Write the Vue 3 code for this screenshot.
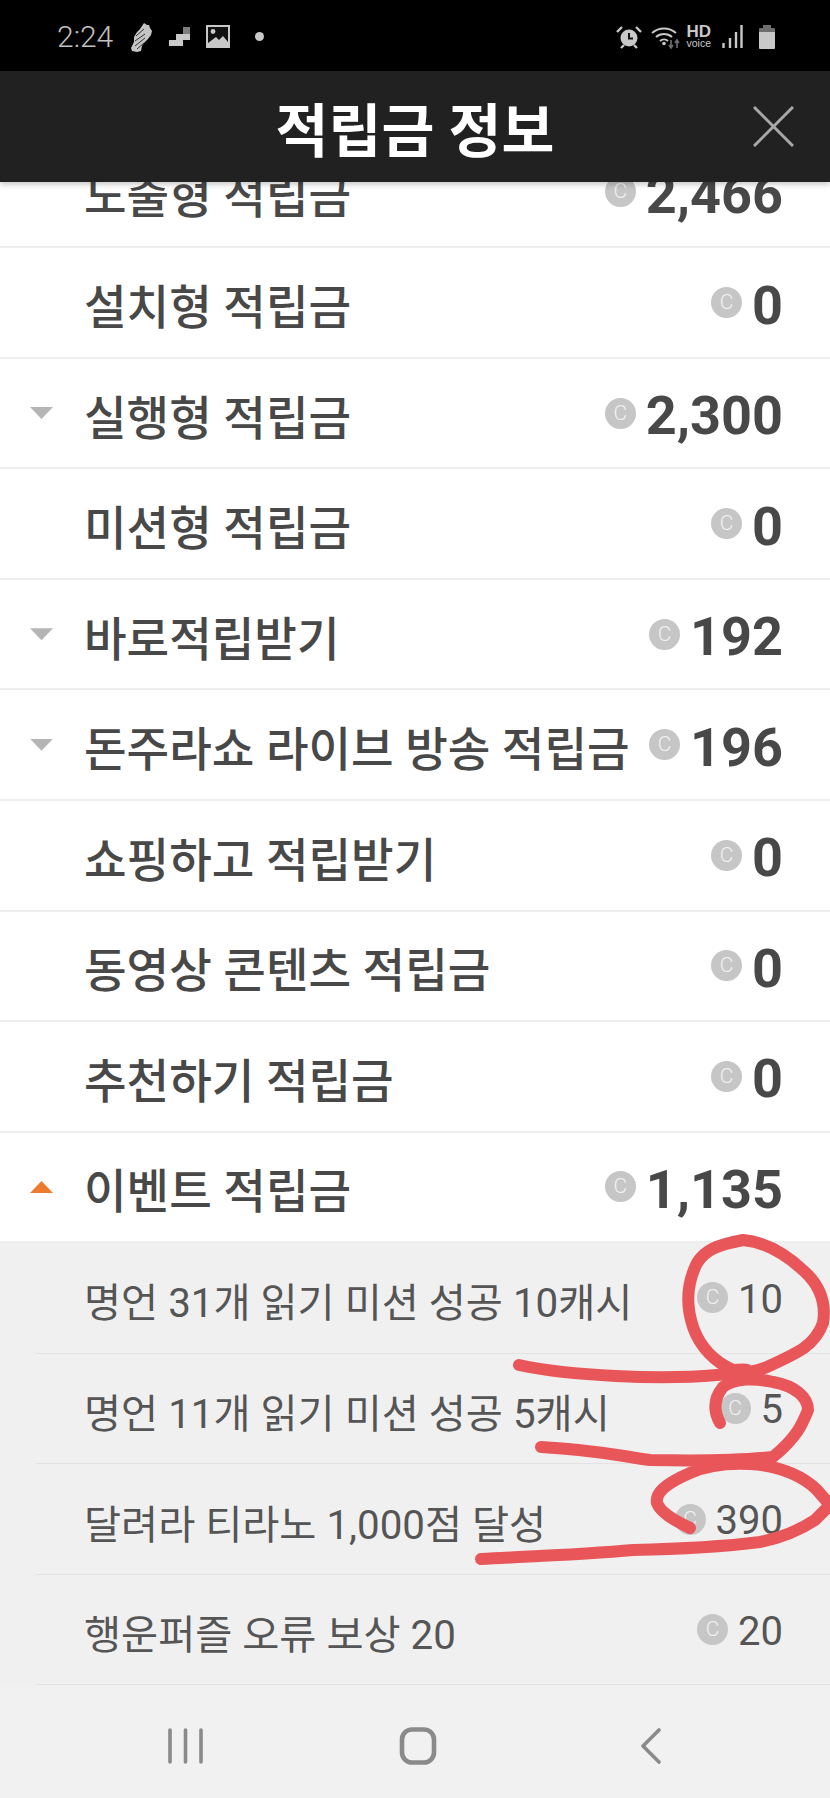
<template>
  <div class="page">
    <div class="status">
      <div class="status-left">
        <span class="time">2:24</span>
        <svg class="ic-shoe" width="23" height="30" viewBox="0 0 23 30">
          <path d="M14 1l3 2 2 0 1 3 2 3-1 4-3 4-4 4-2 3-1 5-4 1-5-1-1-3 3-6 0-5 3-5 3-3 2-3z" fill="#c4c4c4" />
          <path d="M6 14l8-7M5 19l10-7M5 24l10-8M7 27l7-6" stroke="#333" stroke-width="1" fill="none" />
        </svg>
        <svg class="ic-stairs" width="21" height="19" viewBox="0 0 21 19">
          <path d="M14 0h7v7h-7z" fill="#7d7d7d" />
          <path d="M14 7h7v6h-7zM7 7h7v6h-7zM0 13h14v6H0z" fill="#c8c8c8" />
        </svg>
        <svg class="ic-image" width="24" height="23" viewBox="0 0 24 23">
          <path d="M0 0h24v23H0z" fill="#c8c8c8" />
          <path d="M2 2h20v15l-5-6-4 4-3-3-8 6z" fill="#111" />
          <circle cx="7" cy="6.5" r="2.4" fill="#c8c8c8" />
        </svg>
        <span class="dot"></span>
      </div>
      <div class="status-right">
        <svg class="ic-alarm" width="26" height="24" viewBox="0 0 26 24">
          <circle cx="13" cy="13" r="8.5" fill="#c8c8c8" />
          <path d="M13 8v5.5h4" stroke="#111" stroke-width="2" fill="none" />
          <path d="M1 7l5-5M25 7l-5-5" stroke="#c8c8c8" stroke-width="2.4" />
          <path d="M5 23l3-3M21 23l-3-3" stroke="#c8c8c8" stroke-width="2.4" />
        </svg>
        <svg class="ic-wifi" width="30" height="24" viewBox="0 0 30 24">
          <g fill="none" stroke="#c8c8c8" stroke-width="2">
            <path d="M1 8a18 18 0 0 1 24 0" />
            <path d="M5 12a12 12 0 0 1 16 0" />
            <path d="M9 16a6 6 0 0 1 8 0" />
          </g>
          <circle cx="13" cy="18.5" r="1.8" fill="#c8c8c8" />
          <path d="M20 15v7M18 20l2 3 2-3" stroke="#6e6e6e" stroke-width="1.6" fill="none" />
          <path d="M26 23v-7M24 18l2-3 2 3" stroke="#6e6e6e" stroke-width="1.6" fill="none" />
        </svg>
        <div class="hd">
          <span class="hd-top">HD</span>
          <span class="hd-sub">voice</span>
        </div>
        <svg class="ic-signal" width="21" height="23" viewBox="0 0 21 23">
          <path d="M1.5 18v5M8 13v10M14 7v16M19.5 0v23" stroke="#c8c8c8" stroke-width="2.4" />
        </svg>
        <svg class="ic-battery" width="16" height="24" viewBox="0 0 16 24">
          <path d="M4 0h8v3H4z" fill="#6e6e6e" />
          <path d="M1 3h14a1 1 0 0 1 1 1v3H0V4a1 1 0 0 1 1-1z" fill="#6e6e6e" />
          <path d="M0 7h16v16a1 1 0 0 1-1 1H1a1 1 0 0 1-1-1z" fill="#c8c8c8" />
        </svg>
      </div>
    </div>

    <header class="top">
      <h1>적립금 정보</h1>
      <svg class="close" width="41" height="41" viewBox="0 0 41 41">
        <path d="M1 1l39 39M40 1L1 40" stroke="#a8a8a8" stroke-width="3" />
      </svg>
    </header>

    <main class="list">
      <div class="list-inner">
        <div v-for="row in rows" :key="row.name" class="row">
          <span class="arrow" :class="row.arrow"></span>
          <span class="name">{{ row.name }}</span>
          <span class="coin"><i>C</i></span>
          <span class="amount">{{ row.amount }}</span>
        </div>
        <div class="subs">
          <div v-for="sub in subs" :key="sub.name" class="sub">
            <span class="sub-name">{{ sub.name }}</span>
            <span class="coin"><i>C</i></span>
            <span class="sub-amount">{{ sub.amount }}</span>
          </div>
        </div>
      </div>
    </main>

    <nav class="nav">
      <svg width="35" height="36" viewBox="0 0 35 36">
        <path d="M2 2v32M17.5 2v32M33 2v32" stroke="#8a8a8a" stroke-width="3.6" stroke-linecap="round" />
      </svg>
      <svg width="38" height="38" viewBox="0 0 38 38">
        <rect x="3" y="2.5" width="32" height="33" rx="10" fill="none" stroke="#8a8a8a" stroke-width="4.6" />
      </svg>
      <svg width="22" height="36" viewBox="0 0 22 36">
        <path d="M19 2L3 18l16 16" fill="none" stroke="#8a8a8a" stroke-width="3.6" stroke-linecap="round" stroke-linejoin="round" />
      </svg>
    </nav>

    <svg class="scribble" width="830" height="1798" viewBox="0 0 830 1798">
      <g fill="none" stroke="#e9565a" stroke-width="12" stroke-linecap="round" stroke-linejoin="round">
        <path d="M519 1365C570 1376 660 1380 717 1375C745 1373 760 1368 733 1370C715 1362 700 1347 693 1327C685 1303 687 1283 697 1263C705 1250 717 1245 743 1240C765 1242 787 1255 805 1272C822 1288 826 1305 823 1323C815 1345 800 1352 767 1367C755 1372 745 1373 733 1373" />
        <path d="M720 1423C713 1410 714 1398 723 1387C735 1378 755 1378 773 1382C795 1386 808 1397 808 1410C802 1425 797 1437 773 1457C745 1460 700 1461 650 1460C625 1457 600 1450 541 1447" />
        <path d="M690 1528C675 1521 660 1512 657 1503C655 1493 665 1484 690 1473C710 1464 730 1463 750 1464C783 1466 805 1478 817 1490L830 1505L815 1520C800 1530 780 1538 760 1542C720 1547 680 1549 633 1550C590 1554 540 1556 481 1559" />
      </g>
    </svg>
  </div>
</template>

<script setup>
const rows = [
  { name: '노출형 적립금', amount: '2,466', arrow: '' },
  { name: '설치형 적립금', amount: '0', arrow: '' },
  { name: '실행형 적립금', amount: '2,300', arrow: 'down' },
  { name: '미션형 적립금', amount: '0', arrow: '' },
  { name: '바로적립받기', amount: '192', arrow: 'down' },
  { name: '돈주라쇼 라이브 방송 적립금', amount: '196', arrow: 'down' },
  { name: '쇼핑하고 적립받기', amount: '0', arrow: '' },
  { name: '동영상 콘텐츠 적립금', amount: '0', arrow: '' },
  { name: '추천하기 적립금', amount: '0', arrow: '' },
  { name: '이벤트 적립금', amount: '1,135', arrow: 'up' },
]

const subs = [
  { name: '명언 31개 읽기 미션 성공 10캐시', amount: '10' },
  { name: '명언 11개 읽기 미션 성공 5캐시', amount: '5' },
  { name: '달려라 티라노 1,000점 달성', amount: '390' },
  { name: '행운퍼즐 오류 보상 20', amount: '20' },
]
</script>

<style>
html, body {
  margin: 0;
  overflow: hidden;
}
</style>

<style scoped>
.page {
  position: relative;
  width: 830px;
  height: 1798px;
  display: flex;
  flex-direction: column;
  overflow: hidden;
  background: #fff;
  font-family: Roboto, "Noto Sans CJK KR", sans-serif;
}
.status {
  height: 71px;
  flex: none;
  background: #000;
  display: flex;
  justify-content: space-between;
  align-items: center;
  padding: 2px 55px 0 57px;
  box-sizing: border-box;
}
.status-left,
.status-right {
  display: flex;
  align-items: center;
}
.time {
  color: #c0c0c0;
  font-size: 30px;
  font-weight: 300;
  margin-right: 17px;
}
.ic-stairs {
  margin-left: 16px;
}
.ic-image {
  margin-left: 16px;
}
.dot {
  width: 9px;
  height: 9px;
  border-radius: 50%;
  background: #c8c8c8;
  margin-left: 25px;
}
.ic-wifi {
  margin-left: 9px;
}
.hd {
  margin-left: 5px;
  display: flex;
  flex-direction: column;
  align-items: center;
  color: #c8c8c8;
  font-family: "Liberation Sans", sans-serif;
  line-height: 1;
}
.hd-top {
  font-size: 17px;
  font-weight: 700;
  line-height: 13px;
}
.hd-sub {
  font-size: 10.5px;
  line-height: 10px;
}
.ic-signal {
  margin-left: 11px;
}
.ic-battery {
  margin-left: 16px;
}
.top {
  height: 111px;
  flex: none;
  background: #212121;
  position: relative;
  z-index: 2;
  display: flex;
  align-items: center;
  justify-content: center;
  box-shadow: 0 2px 6px rgba(0, 0, 0, 0.25);
}
.top h1 {
  margin: 0;
  color: #fff;
  font-size: 57.5px;
  font-weight: 700;
}
.close {
  position: absolute;
  right: 36px;
  top: 35px;
}
.list {
  flex: 1;
  min-height: 0;
  overflow: hidden;
  background: #f0f0f0;
}
.list-inner {
  margin-top: -44.3px;
}
.row {
  height: 110.55px;
  box-sizing: border-box;
  border-bottom: 2px solid #eeeeee;
  padding: 0 47px 0 30px;
  display: flex;
  align-items: center;
  color: #484848;
  background: #fff;
}
.arrow {
  width: 23px;
  height: 12px;
  flex: none;
  margin-right: 31px;
}
.arrow.down {
  background: #b5b5b5;
  clip-path: polygon(0 0, 100% 0, 50% 100%);
}
.arrow.up {
  background: #ee7b2c;
  clip-path: polygon(50% 0, 100% 100%, 0 100%);
}
.name {
  flex: 1;
  font-size: 46.3px;
  font-weight: 500;
  white-space: nowrap;
  padding-top: 2px;
}
.coin {
  width: 31px;
  height: 31px;
  border-radius: 50%;
  background: #c6c6c6;
  flex: none;
  margin-right: 10px;
  display: flex;
  align-items: center;
  justify-content: center;
}
.coin i {
  color: #f2f2f2;
  font-style: normal;
  font-size: 21px;
  font-weight: 300;
  line-height: 1;
}
.amount {
  font-size: 54px;
  font-weight: 700;
  line-height: 1;
  padding-top: 6px;
}
.subs {
  background: #f0f0f0;
}
.sub {
  height: 110.55px;
  box-sizing: border-box;
  margin-left: 36px;
  padding: 0 47px 0 48px;
  border-bottom: 1px solid #e3e3e3;
  display: flex;
  align-items: center;
  color: #555;
}
.sub-name {
  flex: 1;
  font-size: 40.3px;
  white-space: nowrap;
  padding-top: 4px;
}
.sub-amount {
  font-size: 40px;
  line-height: 1;
  padding-top: 4px;
}
.nav {
  position: relative;
  z-index: 1;
  height: 112px;
  flex: none;
  background: #f1f1f1;
  display: grid;
  grid-template-columns: repeat(3, 233px);
  justify-content: center;
  align-items: center;
  justify-items: center;
  padding: 8px 0 0 6px;
  box-sizing: border-box;
}
.scribble {
  position: absolute;
  left: 0;
  top: 0;
  z-index: 3;
  pointer-events: none;
}
</style>
